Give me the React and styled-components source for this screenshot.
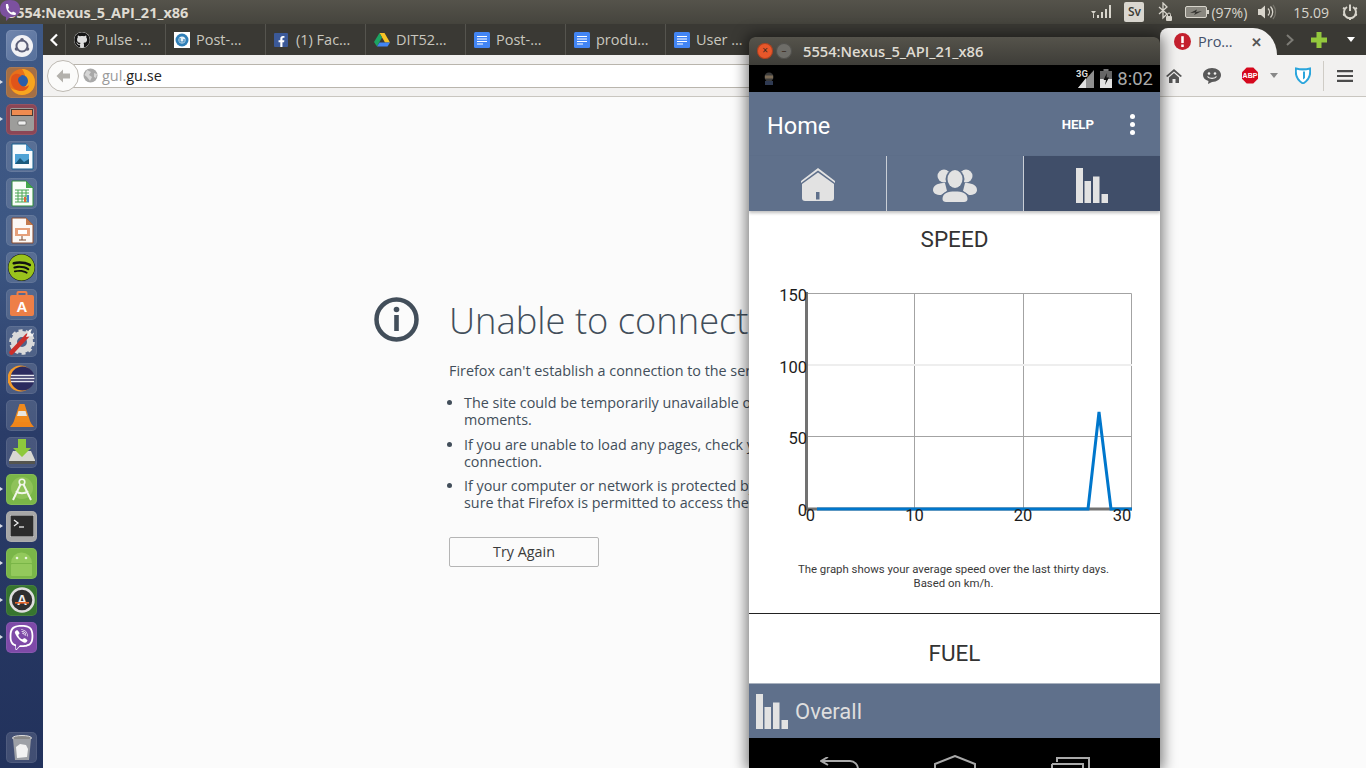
import React from "react";
import styled, { createGlobalStyle } from "styled-components";
import { FaFacebookF, FaGithub, FaSpotify, FaViber } from "react-icons/fa";

const Global = createGlobalStyle`
  html, body { margin: 0; padding: 0; background: #fbfbfb; }
  * { box-sizing: border-box; }
`;

const uiFont = `"Open Sans", "Noto Sans", sans-serif`;
const droid = `Roboto, "Liberation Sans", sans-serif`;

const Desktop = styled.div`
  position: relative;
  width: 1366px;
  height: 768px;
  overflow: hidden;
  display: flex;
  flex-direction: column;
  font-family: ${uiFont};
`;

/* ---------- top panel ---------- */
const TopBar = styled.div`
  position: relative;
  height: 24px;
  flex: none;
  display: flex;
  align-items: center;
  background: linear-gradient(#55534b, #45443d);
  color: #dfdbd2;
  padding-left: 8px;
`;
const WinTitle = styled.div`
  font-size: 14.5px;
  font-weight: 700;
  flex: 1;
`;
const ViberBadge = styled.div`
  position: absolute;
  left: 0;
  top: 0;
  width: 22px;
  height: 22px;
`;
const Tray = styled.div`
  display: flex;
  align-items: center;
  font-size: 14px;
  color: #d8d5cc;
  height: 24px;
`;
const SvBox = styled.div`
  width: 20px;
  height: 20px;
  margin: 0 13px 0 13px;
  background: #dad7d0;
  color: #3c3b37;
  border-radius: 2px;
  font-size: 12px;
  font-weight: 600;
  text-align: center;
  line-height: 20px;
`;
const TraySlot = styled.span`
  display: flex;
  margin: ${(p) => p.$m};
`;

/* ---------- launcher ---------- */
const Main = styled.div`
  flex: 1;
  display: flex;
  min-height: 0;
`;
const Launcher = styled.div`
  width: 43px;
  flex: none;
  display: flex;
  flex-direction: column;
  gap: 5.98px;
  padding: 6px 0 5px 6px;
  background: linear-gradient(#3e5885 0%, #3d5783 30%, #2a3c68 55%, #22325c 100%);
`;
const Tile = styled.div`
  position: relative;
  width: 31px;
  height: 31px;
  flex: none;
  border-radius: 5px;
  background: ${(p) => p.$bg || "rgba(255,255,255,.14)"};
  box-shadow: inset 0 0 0 1px rgba(255,255,255,.08);
  display: flex;
  align-items: center;
  justify-content: center;
  margin-top: ${(p) => p.$push || 0};

  ${(p) =>
    p.$running &&
    `&::before {
      content: "";
      position: absolute;
      left: -6px;
      top: 13px;
      border-left: 3px solid #d9dde6;
      border-top: 2.5px solid transparent;
      border-bottom: 2.5px solid transparent;
    }`}
`;

/* ---------- browser ---------- */
const Browser = styled.div`
  flex: 1;
  display: flex;
  flex-direction: column;
  min-width: 0;
`;
const TabStrip = styled.div`
  height: 31px;
  flex: none;
  display: flex;
  align-items: stretch;
  background: #3a3934;
  position: relative;
`;
const ScrollLeft = styled.div`
  width: 22px;
  display: flex;
  align-items: center;
  justify-content: center;
`;
const Tab = styled.div`
  width: 100px;
  flex: none;
  display: flex;
  align-items: center;
  gap: 6px;
  padding-left: 8px;
  border-left: 1px solid #55544e;
  color: #c9c7bf;
  font-size: 14.5px;
  white-space: nowrap;
`;
const FbSquare = styled.div`
  width: 14px;
  height: 14px;
  margin-right: 2px;
  background: #3b5998;
  border-radius: 1px;
  display: flex;
  align-items: flex-end;
  justify-content: flex-end;
  padding-right: 1px;
  color: #fff;
`;
const ActiveTab = styled.div`
  position: absolute;
  left: 1117px;
  top: 4px;
  width: 117px;
  height: 27px;
  background: #f2f1f0;
  border-radius: 8px 24px 0 0 / 8px 27px 0 0;
  display: flex;
  align-items: center;
  padding-left: 14px;
  gap: 7px;
  color: #44506a;
  font-size: 14.5px;
`;
const CloseMark = styled.span`
  margin-left: 11px;
  font-size: 13px;
  font-weight: 700;
  color: #555;
`;
const StripEnd = styled.div`
  position: absolute;
  left: ${(p) => p.$x}px;
  top: 0;
  height: 31px;
  display: flex;
  align-items: center;
`;
const Toolbar = styled.div`
  position: relative;
  height: 42px;
  flex: none;
  background: #f2f1f0;
  border-bottom: 1px solid #c9c6c0;
  display: flex;
  align-items: center;
`;
const UrlBar = styled.div`
  margin: 0 210px 0 20px;
  flex: 1;
  height: 24px;
  background: #fff;
  border-top: 1px solid #b9b5ad;
  border-bottom: 1px solid #b9b5ad;
  display: flex;
  align-items: center;
  padding-left: 20px;
  gap: 4px;
  font-size: 14.5px;
  color: #222;
`;
const Domain = styled.span`
  color: #9a9a9a;
`;
const BackCircle = styled.div`
  position: absolute;
  left: 4px;
  top: 5px;
  width: 32px;
  height: 32px;
  border-radius: 50%;
  background: #fbfbfa;
  border: 1px solid #bdb9b2;
  display: flex;
  align-items: center;
  justify-content: center;
  z-index: 1;
`;
const ToolIconRow = styled.div`
  position: absolute;
  left: 1123px;
  top: 0;
  height: 41px;
  display: flex;
  align-items: center;
`;
const ToolSlot = styled.div`
  flex: none;
  width: ${(p) => p.$w}px;
  display: flex;
  justify-content: center;
`;
const ToolSep = styled.div`
  width: 1px;
  height: 30px;
  background: #cfccc6;
  margin: 0 13px 0 7px;
`;

/* ---------- error page ---------- */
const Page = styled.div`
  flex: 1;
  background: #fbfbfb;
  padding: 200px 0 0 331px;
  display: flex;
  gap: 30px;
  color: #424e5a;
`;
const ErrorBody = styled.div`
  width: 320px;
  white-space: nowrap;
`;
const ErrorTitle = styled.h1`
  margin: 0;
  font-size: 36.3px;
  font-weight: 300;
  line-height: 46px;
`;
const Lead = styled.p`
  margin: 19px 0 0;
  font-size: 14.35px;
  line-height: 18px;
`;
const Bullets = styled.ul`
  margin: 14px 0 0;
  padding: 0 0 0 15px;
  font-size: 14.35px;
  line-height: 17px;
  li { margin-bottom: 7.5px; }
`;
const TryAgain = styled.div`
  margin-top: 26px;
  width: 150px;
  height: 30px;
  border: 1px solid #b5b5b5;
  border-radius: 2px;
  background: #fbfbfb;
  font-size: 14.35px;
  color: #3b3b3b;
  text-align: center;
  line-height: 28px;
`;

/* ---------- emulator window ---------- */
const EmuWindow = styled.div`
  position: absolute;
  left: 749px;
  top: 37px;
  width: 411px;
  height: 731px;
  display: flex;
  flex-direction: column;
  box-shadow: 0 0 14px 3px rgba(0, 0, 0, 0.5);
  border-radius: 6px 6px 0 0;
  overflow: hidden;
  background: #000;
`;
const EmuTitle = styled.div`
  height: 28px;
  flex: none;
  background: linear-gradient(#55534b, #3e3d38);
  display: flex;
  align-items: center;
  padding-left: 8px;
  color: #dfdbd2;
  font-size: 14.7px;
  font-weight: 600;
`;
const WinBtn = styled.div`
  width: 16px;
  height: 16px;
  margin-right: 3px;
  border-radius: 50%;
  background: ${(p) => p.$bg};
  box-shadow: inset 0 0 0 1px rgba(0,0,0,.25);
  color: #3a2a22;
  font-size: 10px;
  font-weight: 400;
  line-height: 15px;
  text-align: center;
`;
const EmuName = styled.span`
  margin-left: 8px;
`;
const StatusBar = styled.div`
  height: 27px;
  flex: none;
  background: #000;
  display: flex;
  align-items: center;
  justify-content: space-between;
  padding: 0 7px 0 13px;
`;
const StatusRight = styled.div`
  display: flex;
  align-items: center;
  gap: 5px;
  color: #a9a9a9;
  font: 400 18.5px ${droid};
`;
const AppBar = styled.div`
  height: 64px;
  flex: none;
  background: #5f708b;
  display: flex;
  align-items: center;
  padding: 3px 0 0 18px;
  color: #fff;
`;
const AppTitle = styled.div`
  flex: 1;
  font: 400 23.5px ${droid};
`;
const HelpAction = styled.div`
  font: 700 13.2px ${droid};
  margin-right: 36px;
  margin-top: -3px;
`;
const Dots = styled.div`
  display: flex;
  flex-direction: column;
  gap: 3px;
  margin-right: 25px;
  margin-top: -3px;
`;
const Dot = styled.span`
  width: 5px;
  height: 5px;
  border-radius: 50%;
  background: #fff;
`;
const TabRow = styled.div`
  height: 55px;
  flex: none;
  display: grid;
  grid-template-columns: 137px 137px 137px;
  background: #5f708b;
  position: relative;
  z-index: 1;
  box-shadow: 0 2px 3px rgba(0,0,0,.25);
`;
const TabCell = styled.div`
  display: flex;
  align-items: center;
  justify-content: center;
  padding-top: 3px;
  background: ${(p) => (p.$active ? "#404e69" : "transparent")};
  border-left: ${(p) => (p.$first ? "none" : "1px solid #c9ced6")};
`;
const Content = styled.div`
  flex: 1;
  background: #fff;
  color: #222;
  font-family: ${droid};
  display: flex;
  flex-direction: column;
  align-items: center;
  min-height: 0;
`;
const SectionTitle = styled.div`
  font-size: 22.5px;
  line-height: 26px;
  color: #333;
  margin-top: ${(p) => p.$top}px;
`;
const ChartBox = styled.div`
  width: 411px;
  height: 260px;
  margin-top: 18px;
  flex: none;
`;
const Caption = styled.div`
  margin-top: 32px;
  padding-right: 2px;
  text-align: center;
  font-size: 11.4px;
  line-height: 14px;
  color: #3a3a3a;
`;
const Rule = styled.div`
  width: 100%;
  height: 1px;
  background: #222;
  margin-top: 23px;
  flex: none;
`;
const BottomBar = styled.div`
  height: 55px;
  flex: none;
  background: #5f708b;
  border-top: 1px solid #a9b2bf;
  display: flex;
  align-items: center;
  gap: 7px;
  padding-left: 7px;
  color: #dedede;
  font: 400 22px ${droid};
`;
const NavBar = styled.div`
  height: 30px;
  flex: none;
  background: #000;
  display: flex;
  overflow: hidden;
`;
const NavSlot = styled.div`
  flex: none;
  margin-left: ${(p) => p.$ml}px;
  margin-top: ${(p) => p.$mt}px;
`;

/* ---------- drawings ---------- */
const BarsIcon = ({ fill = "#e2e2e2" }) => (
  <svg width="32" height="35" viewBox="0 0 32 35">
    <rect x="0" y="0" width="7" height="35" fill={fill} />
    <rect x="8.5" y="13" width="6.5" height="22" fill={fill} />
    <rect x="17" y="8.5" width="6.5" height="26.5" fill={fill} />
    <rect x="25.5" y="26" width="6.5" height="9" fill={fill} />
  </svg>
);

const HomeIcon = () => (
  <svg width="34" height="34" viewBox="0 0 34 34">
    <path d="M17 0 L34 13 V15 L17 2.5 L0 15 V13 Z" fill="#e2e2e2" />
    <path d="M17 4.5 L33 16 V30 a3 3 0 0 1 -3 3 H4 a3 3 0 0 1 -3 -3 V16 Z" fill="#e2e2e2" />
    <rect x="15" y="24" width="3.5" height="7.5" fill="#5f708b" />
  </svg>
);

const PeopleIcon = () => (
  <svg width="44" height="34" viewBox="0 0 44 34">
    <g fill="#e2e2e2">
      <circle cx="11" cy="8" r="6.5" />
      <circle cx="33" cy="8" r="6.5" />
      <path d="M0 22 C0 16 7 15 12 15 L14 23 L8 27 C3 27 0 25 0 22 Z" />
      <path d="M44 22 C44 16 37 15 32 15 L30 23 L36 27 C41 27 44 25 44 22 Z" />
    </g>
    <circle cx="22" cy="11" r="9.5" fill="#5f708b" />
    <path d="M8 34 C7 25 13 22 22 22 C31 22 37 25 36 34 Z" fill="#5f708b" />
    <g fill="#e2e2e2">
      <ellipse cx="22" cy="11" rx="7.5" ry="9" />
      <path d="M9.500 31 C9.500 25 15 23.500 22 23.500 C29 23.500 34.500 25 34.500 31 C34.500 33 33 34 31 34 H13 C11 34 9.500 33 9.500 31 Z" />
    </g>
  </svg>
);

const LineChart = () => (
  <svg width="411" height="260" viewBox="749 270 411 260">
    <rect x="807" y="293" width="325" height="216" fill="#fff" />
    <g stroke="#a3a3a3" strokeWidth="1" fill="none">
      <path d="M807 293.500 H1131.500 V509" />
      <path d="M914.500 293 V509" />
      <path d="M1023.500 293 V509" />
      <path d="M807 436.500 H1132" />
    </g>
    <path d="M807 365 H1132" stroke="#eeeeee" strokeWidth="2" />
    <path d="M806.500 292 V510" stroke="#727272" strokeWidth="3" />
    <path d="M805 509 H1132" stroke="#727272" strokeWidth="3" />
    <path
      d="M817 509 H1088 L1099 412 L1111 509 H1132"
      stroke="#0077cc"
      strokeWidth="3"
      fill="none"
    />
    <g fontFamily={droid} fontSize="16.5" fill="#1c1c1c" textAnchor="end">
      <text x="807" y="301">150</text>
      <text x="807" y="373">100</text>
      <text x="807" y="444">50</text>
      <text x="807" y="516">0</text>
    </g>
    <g fontFamily={droid} fontSize="16.5" fill="#1c1c1c" textAnchor="middle">
      <text x="810.500" y="521">0</text>
      <text x="914.500" y="521">10</text>
      <text x="1023" y="521">20</text>
      <text x="1122" y="521">30</text>
    </g>
  </svg>
);

const DocFavicon = () => (
  <svg width="16" height="16" viewBox="0 0 16 16">
    <rect width="16" height="16" rx="1.500" fill="#4285f4" />
    <path d="M3 4.500 H13 M3 7 H13 M3 9.500 H13 M3 12 H9" stroke="#fff" strokeWidth="1.200" />
  </svg>
);
const GuFavicon = () => (
  <svg width="16" height="16" viewBox="0 0 16 16">
    <rect width="16" height="16" fill="#fff" />
    <circle cx="8" cy="8" r="6.500" fill="#2f7fb8" />
    <circle cx="8" cy="8" r="3.500" fill="#e6f0f6" />
    <path d="M6 6 V10 H10 V7" stroke="#2f7fb8" strokeWidth="1.200" fill="none" />
  </svg>
);
const DriveFavicon = () => (
  <svg width="16" height="16" viewBox="0 0 16 16">
    <path d="M5.500 1 H10.500 L16 10.500 H11 Z" fill="#f7c325" />
    <path d="M5.500 1 L8 5.500 L3 14.500 L0 10 Z" fill="#1da462" />
    <path d="M3 14.500 L5.500 10.500 H16 L13.500 14.500 Z" fill="#4285f4" />
  </svg>
);

const ChevronLeft = () => (
  <svg width="10" height="14" viewBox="0 0 10 14">
    <path d="M8 1.500 L2.500 7 L8 12.500" stroke="#fff" strokeWidth="2.200" fill="none" />
  </svg>
);

const SignalTray = () => (
  <svg width="20" height="14" viewBox="0 0 20 14">
    <path d="M0 6 H5 L2.500 9 Z M2 9 H3 V13 H2 Z" fill="#d8d5cc" />
    <g fill="#d8d5cc">
      <rect x="6" y="10" width="2" height="3" />
      <rect x="10" y="7" width="2" height="6" />
      <rect x="14" y="4" width="2" height="9" />
      <rect x="18" y="0" width="2" height="13" />
    </g>
  </svg>
);
const BluetoothLock = () => (
  <svg width="16" height="20" viewBox="0 0 16 20">
    <path d="M2 5 L10 12 L6 16 V1 L10 5 L2 12" stroke="#d8d5cc" strokeWidth="1.300" fill="none" />
    <rect x="9" y="14" width="6" height="5" rx="1" fill="#d8d5cc" />
    <path d="M10.500 14 V12.500 a1.500 1.500 0 0 1 3 0 V14" stroke="#d8d5cc" fill="none" />
  </svg>
);
const BatteryTray = () => (
  <svg width="24" height="12" viewBox="0 0 24 12">
    <rect x=".5" y=".5" width="21" height="11" rx="1.500" fill="#8a8880" stroke="#d8d5cc" />
    <rect x="22" y="4" width="2" height="4" fill="#d8d5cc" />
    <path d="M5 7 L12 3.500 L11 6 L17 5 L9 9 L10.500 6.500 Z" fill="#33322e" />
  </svg>
);
const VolumeTray = () => (
  <svg width="20" height="16" viewBox="0 0 20 16">
    <path d="M1 5 H4 L8 1.500 V14.500 L4 11 H1 Z" fill="#d8d5cc" />
    <path d="M11 4.500 a5 5 0 0 1 0 7 M13.500 2.500 a8 8 0 0 1 0 11" stroke="#d8d5cc" strokeWidth="1.300" fill="none" />
    <path d="M16 1 a11 11 0 0 1 0 14" stroke="#77756c" strokeWidth="1.200" fill="none" />
  </svg>
);
const PowerGear = () => (
  <svg width="16" height="16" viewBox="0 0 16 16">
    <path d="M5 3 a6 6 0 1 0 6 0" stroke="#d8d5cc" strokeWidth="2" fill="none" />
    <path d="M8 0.500 V7" stroke="#d8d5cc" strokeWidth="2" />
    <path d="M1 4 L3 5 M15 4 L13 5 M1 11 L3 10.500 M15 11 L13 10.500 M8 16 V13.500" stroke="#d8d5cc" strokeWidth="2" />
  </svg>
);

const Globe = () => (
  <svg width="15" height="15" viewBox="0 0 15 15">
    <circle cx="7.500" cy="7.500" r="7" fill="#a9a9a9" />
    <path d="M4 2 L8 4 L6 7 L9 9 L7 13 L4 9 L1.500 7 Z M11 5 L14 6 L13 10 L11 9 Z" fill="#d6d6d6" />
  </svg>
);
const BackArrow = () => (
  <svg width="16" height="16" viewBox="0 0 16 16">
    <path d="M8 1.500 L1.500 8 L8 14.500 V10.500 H15 V5.500 H8 Z" fill="#b3b1ac" />
  </svg>
);
const PlusIcon = () => (
  <svg width="16" height="16" viewBox="0 0 16 16">
    <path d="M5.500 0 H10.500 V5.500 H16 V10.500 H10.500 V16 H5.500 V10.500 H0 V5.500 H5.500 Z" fill="#93c83d" />
  </svg>
);
const RedAlert = () => (
  <svg width="17" height="17" viewBox="0 0 16 16">
    <circle cx="8" cy="8" r="8" fill="#c4202e" />
    <rect x="6.800" y="3" width="2.400" height="6.500" fill="#fff" />
    <rect x="6.800" y="10.800" width="2.400" height="2.400" fill="#fff" />
  </svg>
);
const ToolHome = () => (
  <svg width="16" height="14" viewBox="0 0 16 14">
    <path d="M8 0 L16 7 L14.500 8 L8 2.500 L1.500 8 L0 7 Z M3 8.500 L8 4 L13 8.500 V14 H9.500 V10 H6.500 V14 H3 Z" fill="#555" />
  </svg>
);
const ChatFace = () => (
  <svg width="18" height="16" viewBox="0 0 18 16">
    <path d="M9 0 C14 0 18 3 18 7 C18 11 14 14 9 14 L5 16 L5.500 13 C2 12 0 10 0 7 C0 3 4 0 9 0 Z" fill="#585858" />
    <circle cx="6" cy="5.500" r="1.300" fill="#f2f1f0" />
    <circle cx="12" cy="5.500" r="1.300" fill="#f2f1f0" />
    <path d="M4.500 8.500 C6 11 12 11 13.500 8.500" stroke="#f2f1f0" strokeWidth="1.200" fill="none" />
  </svg>
);
const AbpBadge = () => (
  <svg width="17" height="17" viewBox="0 0 17 17">
    <path d="M5 0 H12 L17 5 V12 L12 17 H5 L0 12 V5 Z" fill="#d5081d" />
    <text x="8.500" y="11.200" fontFamily="Liberation Sans" fontWeight="700" fontSize="7.500" fill="#fff" textAnchor="middle">ABP</text>
  </svg>
);
const ShieldIcon = () => (
  <svg width="16" height="17" viewBox="0 0 16 17">
    <path d="M1 1.500 C5 2.500 11 2.500 15 1.500 C16 8 14 13 8 16.500 C2 13 0 8 1 1.500 Z" fill="#fff" stroke="#2aa5dc" strokeWidth="2" />
    <path d="M8 4.500 H10 V11 L8 12.500 Z" fill="#2aa5dc" />
  </svg>
);
const Caret = ({ color = "#888" }) => (
  <svg width="8" height="5" viewBox="0 0 8 5">
    <path d="M0 0 H8 L4 5 Z" fill={color} />
  </svg>
);
const Hamburger = () => (
  <svg width="16" height="12" viewBox="0 0 16 12">
    <path d="M0 1.200 H16 M0 6 H16 M0 10.800 H16" stroke="#4b4b4b" strokeWidth="2.200" />
  </svg>
);
const InfoIcon = () => (
  <svg width="45" height="45" viewBox="0 0 45 45" style={{ flex: "none" }}>
    <circle cx="22.500" cy="22.500" r="20" fill="none" stroke="#424e5a" strokeWidth="4.500" />
    <circle cx="22.500" cy="12.500" r="2.800" fill="#424e5a" />
    <rect x="20.200" y="18" width="4.600" height="16" fill="#424e5a" />
  </svg>
);
const SmallDroidIcon = () => (
  <svg width="14" height="14" viewBox="0 0 14 14">
    <circle cx="7" cy="5" r="4.500" fill="#3c3c3c" />
    <rect x="3" y="3.500" width="8" height="3" fill="#7a6a55" />
    <rect x="3" y="9" width="8" height="4" fill="#2f3a52" />
  </svg>
);
const Signal3G = () => (
  <svg width="19" height="19" viewBox="0 0 19 19">
    <path d="M18 1 V19 H2 Z" fill="#8f8f8f" />
    <path d="M10 9 V19 H2 Z" fill="#e0e0e0" />
    <text x="0" y="8" fontFamily="Roboto" fontSize="9.500" fill="#d9d9d9" fontWeight="700">3G</text>
  </svg>
);
const DroidBattery = () => (
  <svg width="12" height="19" viewBox="0 0 12 19">
    <rect x="3.500" y="0" width="5" height="2" fill="#777" />
    <rect x="0" y="2" width="12" height="17" fill="#666" />
    <rect x="0" y="10" width="12" height="9" fill="#e2e2e2" />
    <path d="M7 4 L3.500 11 H6 L5 16 L9 8.500 H6.500 Z" fill="#111" />
  </svg>
);
const NavBack = () => (
  <svg width="40" height="30" viewBox="0 0 40 30">
    <path d="M8 0 L1 4 L8 8 M2 4 H30 a8 8 0 0 1 8 8 V30" stroke="#a9a9a9" strokeWidth="2" fill="none" />
  </svg>
);
const NavHome = () => (
  <svg width="42" height="30" viewBox="0 0 42 30">
    <path d="M1 30 V9 L21 1 L41 9 V30" stroke="#a9a9a9" strokeWidth="2" fill="none" />
  </svg>
);
const NavRecents = () => (
  <svg width="40" height="30" viewBox="0 0 40 30">
    <path d="M6 5 V1 H38 V30 M1 7 H32 V30 M1 7 V30" stroke="#a9a9a9" strokeWidth="2" fill="none" />
  </svg>
);

/* launcher icons */
const icons = {
  dash: (
    <svg width="24" height="24" viewBox="0 0 24 24">
      <circle cx="12" cy="12" r="11" fill="#f2f2f5" />
      <circle cx="12" cy="12" r="5.500" fill="none" stroke="#5c5f78" strokeWidth="2" />
      <circle cx="12" cy="5.800" r="1.800" fill="#5c5f78" />
      <circle cx="6.500" cy="15" r="1.800" fill="#5c5f78" />
      <circle cx="17.500" cy="15" r="1.800" fill="#5c5f78" />
    </svg>
  ),
  firefox: (
    <svg width="28" height="28" viewBox="0 0 28 28">
      <circle cx="14" cy="14" r="13" fill="#e8701a" />
      <path d="M14 1 C21 1 27 7 27 14 C27 22 21 27 14 27 C9 27 5 24 3 20 C7 23 13 23 16 20 C19 17 18 13 15 12 C19 10 17 6 14 1 Z" fill="#f7a51f" />
      <circle cx="14" cy="13" r="6" fill="#2b5ea8" />
      <path d="M4 8 C8 4 12 6 14 8 C10 8 9 12 11 15 C13 19 18 20 21 17 C20 23 12 25 7 21 C3 18 2 12 4 8 Z" fill="#e0541a" />
    </svg>
  ),
  files: (
    <svg width="26" height="26" viewBox="0 0 26 26">
      <rect x="1" y="2" width="24" height="23" rx="2" fill="#9d9d9b" />
      <rect x="2" y="3" width="22" height="7" fill="#4a3a32" />
      <rect x="3" y="4" width="20" height="5" fill="#ef8b50" />
      <rect x="9" y="15" width="8" height="4" rx="1" fill="#efefef" stroke="#555" strokeWidth=".6" />
    </svg>
  ),
  writer: (
    <svg width="24" height="27" viewBox="0 0 24 27">
      <path d="M2 1 H16 L23 8 V26 H2 Z" fill="#f8fbfd" stroke="#15608f" />
      <path d="M16 1 L23 8 H16 Z" fill="#4b93c8" />
      <rect x="5" y="11" width="14" height="10" fill="#4ea2d5" />
      <path d="M5 21 L10 15 L14 19 L19 16 V21 Z" fill="#1a5a7c" />
    </svg>
  ),
  calc: (
    <svg width="24" height="27" viewBox="0 0 24 27">
      <path d="M2 1 H16 L23 8 V26 H2 Z" fill="#f8fdf8" stroke="#2f8a3a" />
      <path d="M16 1 L23 8 H16 Z" fill="#43a84b" />
      <path d="M5 10 H19 M5 13 H19 M5 16 H19 M5 19 H19 M5 22 H19 M8 10 V22 M12 10 V22 M16 10 V22" stroke="#4aa654" strokeWidth="1" />
      <rect x="14" y="17" width="2" height="5" fill="#e06a3a" />
      <rect x="17" y="15" width="2" height="7" fill="#4a88d0" />
    </svg>
  ),
  impress: (
    <svg width="24" height="27" viewBox="0 0 24 27">
      <path d="M2 1 H16 L23 8 V26 H2 Z" fill="#fcf8f5" stroke="#8a4a2c" />
      <path d="M16 1 L23 8 H16 Z" fill="#c27a4e" />
      <rect x="5" y="11" width="15" height="8" fill="#e6a07a" />
      <rect x="8" y="13" width="9" height="4" fill="#fff" />
      <path d="M12 19 V23 M9 23 H16" stroke="#7c4a30" strokeWidth="1" />
    </svg>
  ),
  software: (
    <svg width="26" height="26" viewBox="0 0 26 26">
      <rect x="8.500" y="1" width="9" height="5" rx="1" fill="none" stroke="#ee7f47" strokeWidth="2" />
      <rect x="1" y="4" width="24" height="21" rx="2" fill="#ee7f47" />
      <text x="13" y="21" fontFamily="Liberation Sans" fontWeight="700" fontSize="15" fill="#fff" textAnchor="middle">A</text>
    </svg>
  ),
  settings: (
    <svg width="27" height="27" viewBox="0 0 27 27">
      <circle cx="14" cy="14" r="8" fill="none" stroke="#dadada" strokeWidth="6" />
      <circle cx="14" cy="14" r="11.500" fill="none" stroke="#dadada" strokeWidth="2.500" strokeDasharray="4 3.200" />
      <path d="M3.500 24.500 L19 8" stroke="#cb2f2b" strokeWidth="4.500" strokeLinecap="round" />
      <path d="M18 9 L21 2 L24 1 L22.500 4.500 L24 6 L26 4.500 L25 8 Z" fill="#efefef" />
    </svg>
  ),
  eclipse: (
    <svg width="27" height="27" viewBox="0 0 27 27">
      <circle cx="12.500" cy="13.500" r="13" fill="#f39a2a" />
      <circle cx="14.500" cy="13.500" r="12" fill="#2b2a5e" />
      <path d="M3 10.500 H26 M2.500 13.500 H26.500 M3 16.500 H26" stroke="#e8e8ef" strokeWidth="1.600" />
    </svg>
  ),
  vlc: (
    <svg width="24" height="25" viewBox="0 0 24 25">
      <path d="M9.500 1 H14.500 L21 21 H3 Z" fill="#f08a1c" />
      <path d="M8.500 8 H15.500 L17 13 H7 Z" fill="#e9e6df" />
      <path d="M0 24 L4 19 H20 L24 24 Z" fill="#f0851a" />
    </svg>
  ),
  install: (
    <svg width="28" height="26" viewBox="0 0 28 26">
      <path d="M5 12 H23 L27 21 V25 H1 V21 Z" fill="#d8d8d2" />
      <rect x="1" y="22" width="26" height="3" fill="#55554f" />
      <path d="M10 0 H18 V9 H23 L14 18 L5 9 H10 Z" fill="#8ec93c" />
    </svg>
  ),
  studio: (
    <svg width="24" height="26" viewBox="0 0 24 26">
      <circle cx="12" cy="12" r="11" fill="#8fc259" />
      <circle cx="12" cy="6" r="2.800" fill="none" stroke="#f2f6ea" strokeWidth="1.600" />
      <path d="M10.500 8.500 L3 24 M13.500 8.500 L21 24 M6 15 C9 18 15 18 18 15" stroke="#f2f6ea" strokeWidth="2" fill="none" />
    </svg>
  ),
  terminal: (
    <svg width="24" height="22" viewBox="0 0 24 22">
      <rect width="24" height="22" rx="1" fill="#2c2c2c" stroke="#e8e8e8" />
      <path d="M4 5 L8 8 L4 11" stroke="#eee" strokeWidth="1.300" fill="none" />
      <path d="M9 12 H14" stroke="#eee" strokeWidth="1.300" />
    </svg>
  ),
  android: (
    <svg width="27" height="27" viewBox="0 0 27 27">
      <path d="M3 13 a10.500 10.500 0 0 1 21 0 Z" fill="#93c95c" />
      <circle cx="9" cy="8" r="1.300" fill="#e8f4da" />
      <circle cx="18" cy="8" r="1.300" fill="#e8f4da" />
      <rect x="3" y="14" width="21" height="12" fill="#93c95c" rx="1" />
    </svg>
  ),
  updater: (
    <svg width="26" height="26" viewBox="0 0 26 26">
      <circle cx="13" cy="13" r="11.500" fill="#2f2f2f" stroke="#dedede" strokeWidth="2.500" />
      <text x="13" y="18" fontFamily="Liberation Sans" fontWeight="700" fontSize="14" fill="#eee" textAnchor="middle">A</text>
      <rect x="6" y="15" width="14" height="1.600" fill="#e8672c" />
    </svg>
  ),
  viber: <FaViber size={25} color="#fff" />,
  trash: (
    <svg width="20" height="26" viewBox="0 0 20 26">
      <ellipse cx="10" cy="3" rx="9.500" ry="2.500" fill="#888" stroke="#ddd" />
      <path d="M1 4 L3 25 H17 L19 4 Z" fill="#9da0a6" />
      <path d="M4 12 L8 9 L14 10 L16 14 L15 22 L5 23 Z" fill="#f2f2f2" />
    </svg>
  ),
  spotify: <FaSpotify size={27} color="#9ac31c" style={{ background: "#111", borderRadius: "50%" }} />,
};

const launcherItems = [
  { key: "dash", bg: "linear-gradient(135deg,#7186ad,#56709c)" },
  { key: "firefox", bg: "#a56f45", running: true },
  { key: "files", bg: "#8c4656", running: true },
  { key: "writer" },
  { key: "calc" },
  { key: "impress" },
  { key: "spotify" },
  { key: "software" },
  { key: "settings" },
  { key: "eclipse" },
  { key: "vlc" },
  { key: "install" },
  { key: "studio", bg: "#7ab648", running: true },
  { key: "terminal", bg: "#a7a7a7", running: true },
  { key: "android", bg: "#7ab648", running: true },
  { key: "updater", bg: "#37752f", running: true },
  { key: "viber", bg: "#7e4aa8", running: true },
  { key: "trash", push: "74px" },
];

const tabs = [
  { label: "Pulse ·…", icon: <FaGithub size={16} color="#151515" style={{ background: "#ddd", borderRadius: "50%" }} /> },
  { label: "Post-…", icon: <GuFavicon /> },
  { label: "(1) Fac…", icon: <FbSquare><FaFacebookF size={11} /></FbSquare> },
  { label: "DIT52…", icon: <DriveFavicon /> },
  { label: "Post-…", icon: <DocFavicon /> },
  { label: "produ…", icon: <DocFavicon /> },
  { label: "User …", icon: <DocFavicon /> },
];

function ToolIcons() {
  return (
    <ToolIconRow>
      <ToolSlot $w={16}><ToolHome /></ToolSlot>
      <ToolSlot $w={60}><ChatFace /></ToolSlot>
      <ToolSlot $w={16}><AbpBadge /></ToolSlot>
      <ToolSlot $w={32}><Caret /></ToolSlot>
      <ToolSlot $w={26}><ShieldIcon /></ToolSlot>
      <ToolSep />
      <ToolSlot $w={16}><Hamburger /></ToolSlot>
    </ToolIconRow>
  );
}

export default function App() {
  return (
    <Desktop>
      <Global />
      <TopBar>
        <WinTitle>5554:Nexus_5_API_21_x86</WinTitle>
        <ViberBadge>
          <svg width="22" height="22" viewBox="0 0 22 22">
            <path d="M10 0 C16 0 20 3 20 9 C20 15 16 17 10 17 L6 21 V17 C2 16 0 13 0 9 C0 3 4 0 10 0 Z" fill="#7c519f" />
            <path d="M6 4 L8 4 L9 8 L8 9 C9 11 10 12 12 12.500 L13 11.500 L16 13 L15.500 15 C10 16 5 10 6 4 Z" fill="#fff" />
          </svg>
        </ViberBadge>
        <Tray>
          <SignalTray />
          <SvBox>Sv</SvBox>
          <BluetoothLock />
          <TraySlot $m="0 2px 0 12px"><BatteryTray /></TraySlot>
          <span>(97%)</span>
          <TraySlot $m="0 16px 0 10px"><VolumeTray /></TraySlot>
          <span>15.09</span>
          <TraySlot $m="0 8px 0 13px"><PowerGear /></TraySlot>
        </Tray>
      </TopBar>
      <Main>
        <Launcher>
          {launcherItems.map((it) => (
            <Tile key={it.key} $bg={it.bg} $running={it.running} $push={it.push}>
              {icons[it.key]}
            </Tile>
          ))}
        </Launcher>
        <Browser>
          <TabStrip>
            <ScrollLeft><ChevronLeft /></ScrollLeft>
            {tabs.map((t, i) => (
              <Tab key={i}>
                {t.icon}
                <span>{t.label}</span>
              </Tab>
            ))}
            <ActiveTab>
              <RedAlert />
              <span>Pro…</span>
              <CloseMark>✕</CloseMark>
            </ActiveTab>
            <StripEnd $x={1243}>
              <svg width="8" height="12" viewBox="0 0 8 12">
                <path d="M1 1 L6.500 6 L1 11" stroke="#7d7c76" strokeWidth="2" fill="none" />
              </svg>
            </StripEnd>
            <StripEnd $x={1268}><PlusIcon /></StripEnd>
            <StripEnd $x={1304}><Caret color="#fff" /></StripEnd>
          </TabStrip>
          <Toolbar>
            <BackCircle><BackArrow /></BackCircle>
            <UrlBar>
              <Globe />
              <span><Domain>gul.</Domain>gu.se</span>
            </UrlBar>
            <ToolIcons />
          </Toolbar>
          <Page>
            <InfoIcon />
            <ErrorBody>
              <ErrorTitle>Unable to connect</ErrorTitle>
              <Lead>Firefox can't establish a connection to the ser</Lead>
              <Bullets>
                <li>The site could be temporarily unavailable or<br />moments.</li>
                <li>If you are unable to load any pages, check your<br />connection.</li>
                <li>If your computer or network is protected by<br />sure that Firefox is permitted to access the</li>
              </Bullets>
              <TryAgain>Try Again</TryAgain>
            </ErrorBody>
          </Page>
        </Browser>
      </Main>

      <EmuWindow>
        <EmuTitle>
          <WinBtn $bg="#e8572a">×</WinBtn>
          <WinBtn $bg="#6e6d68">–</WinBtn>
          <EmuName>5554:Nexus_5_API_21_x86</EmuName>
        </EmuTitle>
        <StatusBar>
          <SmallDroidIcon />
          <StatusRight>
            <Signal3G />
            <DroidBattery />
            <span>8:02</span>
          </StatusRight>
        </StatusBar>
        <AppBar>
          <AppTitle>Home</AppTitle>
          <HelpAction>HELP</HelpAction>
          <Dots><Dot /><Dot /><Dot /></Dots>
        </AppBar>
        <TabRow>
          <TabCell $first><HomeIcon /></TabCell>
          <TabCell><PeopleIcon /></TabCell>
          <TabCell $active><BarsIcon /></TabCell>
        </TabRow>
        <Content>
          <SectionTitle $top={15}>SPEED</SectionTitle>
          <ChartBox><LineChart /></ChartBox>
          <Caption>
            The graph shows your average speed over the last thirty days.
            <br />
            Based on km/h.
          </Caption>
          <Rule />
          <SectionTitle $top={26}>FUEL</SectionTitle>
        </Content>
        <BottomBar>
          <BarsIcon />
          <span>Overall</span>
        </BottomBar>
        <NavBar>
          <NavSlot $ml={71} $mt={19}><NavBack /></NavSlot>
          <NavSlot $ml={74} $mt={17}><NavHome /></NavSlot>
          <NavSlot $ml={75} $mt={19}><NavRecents /></NavSlot>
        </NavBar>
      </EmuWindow>
    </Desktop>
  );
}
